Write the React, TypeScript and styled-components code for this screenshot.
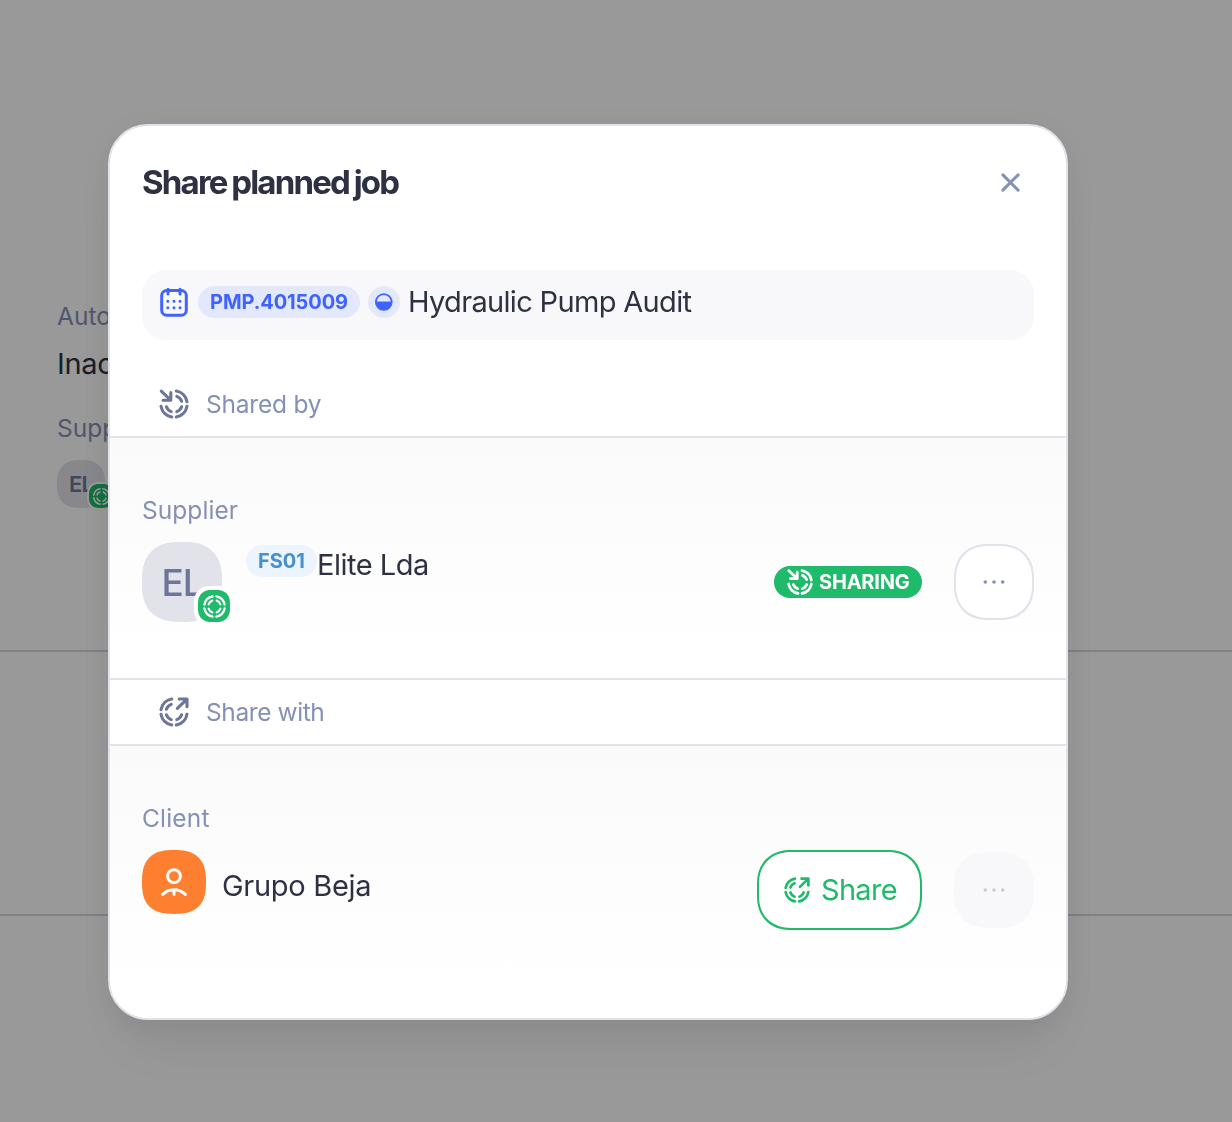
import type { ReactNode } from "react";
import styled, { createGlobalStyle } from "styled-components";

const GlobalStyle = createGlobalStyle`
  * {
    box-sizing: border-box;
  }

  body {
    margin: 0;
    height: 1122px;
    overflow: hidden;
    background: #fff;
    color: #2d3142;
    font-family: Inter, "Noto Sans", sans-serif;
    -webkit-font-smoothing: antialiased;
  }
`;

type Missing = "none" | "topLeft" | "topRight";

function TargetIcon({ size, missing = "none", weight = 3.1 }: { size: number; missing?: Missing; weight?: number }) {
  return (
    <svg
      width={size}
      height={size}
      viewBox="-16 -16 32 32"
      fill="none"
      stroke="currentColor"
      strokeWidth={weight}
      strokeLinecap="round"
      strokeLinejoin="round"
    >
      <path d="M2.3 13A13.2 13.2 0 0 0 13 2.3M2.8 7.6A8.1 8.1 0 0 0 7.6 2.8" />
      <path d="M-2.3 13A13.2 13.2 0 0 1 -13 2.3M-2.8 7.6A8.1 8.1 0 0 1 -7.6 2.8" />
      {missing !== "topRight" && <path d="M2.3 -13A13.2 13.2 0 0 1 13 -2.3M2.8 -7.6A8.1 8.1 0 0 1 7.6 -2.8" />}
      {missing !== "topLeft" && <path d="M-2.3 -13A13.2 13.2 0 0 0 -13 -2.3M-2.8 -7.6A8.1 8.1 0 0 0 -7.6 -2.8" />}
      {missing === "topLeft" && <path d="M-12.7 -12.9L-3.4 -4M-3.2 -11.4V-3.8H-11" />}
      {missing === "topRight" && <path d="M3.4 -3.6L12.7 -12.7M5.2 -13H13V-5.2" />}
    </svg>
  );
}

function CalendarIcon() {
  return (
    <svg width="32" height="32" viewBox="0 0 32 32" fill="none" stroke="#3f63ff" strokeLinecap="round">
      <rect x="3.7" y="4.6" width="24.6" height="24.6" rx="5" strokeWidth="3" />
      <path d="M10 3.2V8M22 3.2V8" strokeWidth="3" />
      <path d="M9.8 15.3h.01M16 15.3h.01M22 15.3h.01M9.8 21.7h.01M16 21.7h.01M22 21.7h.01" strokeWidth="3" />
    </svg>
  );
}

function HalfIcon() {
  return (
    <svg width="20" height="20" viewBox="0 0 20 20">
      <circle cx="9.8" cy="10" r="7.9" fill="none" stroke="#3f63ff" strokeWidth="1.7" />
      <path d="M1.2 9.6H18.4A8.6 8.6 0 0 1 1.2 9.6Z" fill="#3f63ff" />
    </svg>
  );
}

function CloseIcon() {
  return (
    <svg width="24" height="24" viewBox="0 0 24 24" stroke="#8590b5" strokeWidth="3" strokeLinecap="round">
      <path d="M4.9 4.9L20.1 20.1M20.1 4.9L4.9 20.1" />
    </svg>
  );
}

function PersonIcon() {
  return (
    <svg width="32" height="32" viewBox="0 0 32 32" fill="none" stroke="#fff" strokeWidth="3" strokeLinecap="round">
      <circle cx="16" cy="10.2" r="6.4" />
      <path d="M4.6 28.4C11 22.2 21 22.2 27.4 28.4M16 24.5V28.6" />
    </svg>
  );
}

function DotsIcon() {
  return (
    <svg width="24" height="6" viewBox="0 0 24 6" fill="currentColor">
      <circle cx="3.3" cy="3" r="1.8" />
      <circle cx="12" cy="3" r="1.8" />
      <circle cx="20.7" cy="3" r="1.8" />
    </svg>
  );
}

function Avatar({ small, children }: { small?: boolean; children: ReactNode }) {
  return (
    <AvatarBox $small={small}>
      {children}
      <AvatarBadge $small={small}>
        <TargetIcon size={small ? 19 : 25} weight={small ? 2.6 : 2.8} />
      </AvatarBadge>
    </AvatarBox>
  );
}

function App() {
  return (
    <>
      <GlobalStyle />

      <Page>
        <PageSection $height={652}>
          <Label>Auto</Label>
          <PageValue>Inac</PageValue>
          <Label>Supp</Label>
          <Avatar small>EL</Avatar>
        </PageSection>
        <PageSection $height={264} />
      </Page>

      <Overlay>
        <Modal>
          <Header>
            <Title>Share planned job</Title>
            <CloseButton aria-label="Close">
              <CloseIcon />
            </CloseButton>
          </Header>

          <JobCard>
            <CalendarIcon />
            <Tag $color="#3f63ff" $background="#e3e8fd" $spacing={-0.1} $width={162}>
              PMP.4015009
            </Tag>
            <StatusDot>
              <HalfIcon />
            </StatusDot>
            <Name $spacing={-0.67}>Hydraulic Pump Audit</Name>
          </JobCard>

          <GroupTitle>
            <TargetIcon size={32} missing="topLeft" />
            <Label $spacing={-0.22}>Shared by</Label>
          </GroupTitle>

          <Group $height={240}>
            <Label>Supplier</Label>
            <Row>
              <Avatar>EL</Avatar>
              <Supplier>
                <Tag $color="#4590cf" $background="#ecf4fe" $spacing={0} $width={71}>
                  FS01
                </Tag>
                <Name $spacing={-0.5}>Elite Lda</Name>
              </Supplier>
              <SharingTag>
                <TargetIcon size={28} missing="topLeft" weight={3.2} />
                SHARING
              </SharingTag>
              <MoreButton aria-label="More">
                <DotsIcon />
              </MoreButton>
            </Row>
          </Group>

          <GroupTitle $divided>
            <TargetIcon size={32} missing="topRight" />
            <Label $spacing={-0.4}>Share with</Label>
          </GroupTitle>

          <Group $height={272}>
            <Label $spacing={0.2}>Client</Label>
            <Row>
              <ClientAvatar>
                <PersonIcon />
              </ClientAvatar>
              <ClientName $spacing={-0.3}>Grupo Beja</ClientName>
              <ShareButton>
                <TargetIcon size={28} missing="topRight" />
                <Name $spacing={-0.7}>Share</Name>
              </ShareButton>
              <MoreButton aria-label="More" disabled>
                <DotsIcon />
              </MoreButton>
            </Row>
          </Group>
        </Modal>
      </Overlay>
    </>
  );
}

export default App;

const Page = styled.div`
  height: 1122px;
`;

const PageSection = styled.section<{ $height: number }>`
  height: ${({ $height }) => $height}px;
  padding: 0 57px;
  border-bottom: 2px solid #d6d7dd;
  overflow: hidden;

  > :first-child {
    margin-top: 300px;
  }

  > :last-child {
    margin-top: 16px;
  }
`;

const Label = styled.div<{ $spacing?: number }>`
  color: #8590b5;
  font-size: 24.5px;
  line-height: 32px;
  font-weight: 400;
  letter-spacing: ${({ $spacing = 0.05 }) => $spacing}px;
`;

const PageValue = styled.div`
  margin: 16px 0 32px;
  font-size: 29px;
  line-height: 32px;
  letter-spacing: -0.3px;
`;

const Overlay = styled.div`
  position: fixed;
  inset: 0;
  padding: 124px 0 0 108px;
  background: rgba(0, 0, 0, 0.4);
`;

const Modal = styled.div`
  width: 960px;
  height: 896px;
  background: #fff;
  border: 2px solid #e1e2ea;
  border-radius: 40px;
  overflow: hidden;
  box-shadow:
    0 40px 60px -10px rgba(0, 0, 0, 0.06),
    0 8px 36px rgba(0, 0, 0, 0.08);
`;

const Header = styled.header`
  display: flex;
  align-items: center;
  justify-content: space-between;
  height: 112px;
  padding: 0 32px;
`;

const Title = styled.h1`
  margin: 0;
  font-size: 33px;
  line-height: 40px;
  font-weight: 700;
  letter-spacing: -1.8px;
  word-spacing: -1.4px;
`;

const CloseButton = styled.button`
  display: flex;
  align-items: center;
  justify-content: center;
  width: 48px;
  height: 48px;
  padding: 0;
  border: none;
  background: transparent;
`;

const JobCard = styled.div`
  display: flex;
  gap: 8px;
  height: 70px;
  margin: 32px 32px 0;
  padding: 16px;
  background: #f8f8fb;
  border-radius: 24px;
`;

const Tag = styled.span<{ $color: string; $background: string; $spacing: number; $width: number }>`
  flex: none;
  width: ${({ $width }) => $width}px;
  height: 32px;
  border-radius: 16px;
  text-align: center;
  white-space: nowrap;
  color: ${({ $color }) => $color};
  background: ${({ $background }) => $background};
  font-size: 20px;
  line-height: 32px;
  font-weight: 650;
  letter-spacing: ${({ $spacing }) => $spacing}px;
`;

const StatusDot = styled.span`
  display: flex;
  align-items: center;
  justify-content: center;
  width: 32px;
  height: 32px;
  border-radius: 50%;
  background: #e3e8fd;
`;

const Name = styled.span<{ $spacing?: number }>`
  font-size: 29px;
  line-height: 32px;
  letter-spacing: ${({ $spacing = 0 }) => $spacing}px;
  white-space: nowrap;
`;

const GroupTitle = styled.div<{ $divided?: boolean }>`
  display: flex;
  align-items: center;
  gap: 16px;
  height: ${({ $divided }) => ($divided ? 68 : 66)}px;
  margin-top: ${({ $divided }) => ($divided ? 0 : 32)}px;
  padding: 0 48px;
  border: solid #e1e2ea;
  border-width: ${({ $divided }) => ($divided ? "2px 0" : "0 0 2px")};
  color: #6b7698;
`;

const Group = styled.section<{ $height: number }>`
  height: ${({ $height }) => $height}px;
  padding: 56px 32px 0;
  background: linear-gradient(#fafafa, #fff 90%);
`;

const Row = styled.div`
  display: flex;
  align-items: center;
  height: 80px;
  margin-top: 16px;
`;

const AvatarBox = styled.div<{ $small?: boolean }>`
  position: relative;
  display: flex;
  flex: none;
  align-items: center;
  justify-content: center;
  width: ${({ $small }) => ($small ? 48 : 80)}px;
  height: ${({ $small }) => ($small ? 48 : 80)}px;
  border-radius: 45%;
  corner-shape: superellipse(1.2);
  background: #e1e2ea;
  color: #6b7698;
  font-size: ${({ $small }) => ($small ? 22 : 37)}px;
  line-height: 1;
  font-weight: ${({ $small }) => ($small ? 600 : 500)};
  letter-spacing: -1px;
`;

const AvatarBadge = styled.span<{ $small?: boolean }>`
  position: absolute;
  right: -8px;
  bottom: 0;
  display: flex;
  align-items: center;
  justify-content: center;
  width: ${({ $small }) => ($small ? 24 : 32)}px;
  height: ${({ $small }) => ($small ? 24 : 32)}px;
  border-radius: 42%;
  corner-shape: superellipse(1.2);
  background: #1fba6a;
  color: #fff;
  box-shadow: 0 0 0 ${({ $small }) => ($small ? 2 : 4)}px #fff;
`;

const Supplier = styled.div`
  display: flex;
  flex: 1;
  align-self: flex-start;
  margin-left: 24px;
  padding-top: 3px;

  ${Name} {
    padding-top: 4px;
  }
`;

const SharingTag = styled.span`
  display: flex;
  flex: none;
  align-items: center;
  gap: 5px;
  width: 148px;
  height: 32px;
  margin-right: 32px;
  padding-left: 12px;
  border-radius: 16px;
  background: #1fba6a;
  color: #fff;
  font-size: 20px;
  font-weight: 650;
  letter-spacing: -0.2px;
`;

const MoreButton = styled.button`
  display: flex;
  flex: none;
  align-items: center;
  justify-content: center;
  width: 80px;
  height: 76px;
  padding: 0;
  border: 2px solid #e1e2ea;
  border-radius: 34px;
  corner-shape: superellipse(1.15);
  background: #fff;
  color: #8590b5;

  &:disabled {
    border-color: #f8f8fb;
    background: #f8f8fb;
    color: #c8cbdf;
  }
`;

const ClientAvatar = styled.div`
  display: flex;
  flex: none;
  align-self: flex-start;
  align-items: center;
  justify-content: center;
  width: 64px;
  height: 64px;
  border-radius: 50%;
  corner-shape: superellipse(1.4);
  background: #ff7f30;
`;

const ClientName = styled(Name)`
  flex: 1;
  align-self: flex-start;
  margin-left: 16px;
  padding-top: 20px;
`;

const ShareButton = styled.button`
  display: flex;
  flex: none;
  align-items: center;
  gap: 10px;
  width: 165px;
  height: 80px;
  margin-right: 32px;
  padding: 0 0 0 24px;
  border: 2px solid #1fba6a;
  border-radius: 34px;
  corner-shape: superellipse(1.15);
  background: #fff;
  color: #1fba6a;
  font-family: inherit;
`;
